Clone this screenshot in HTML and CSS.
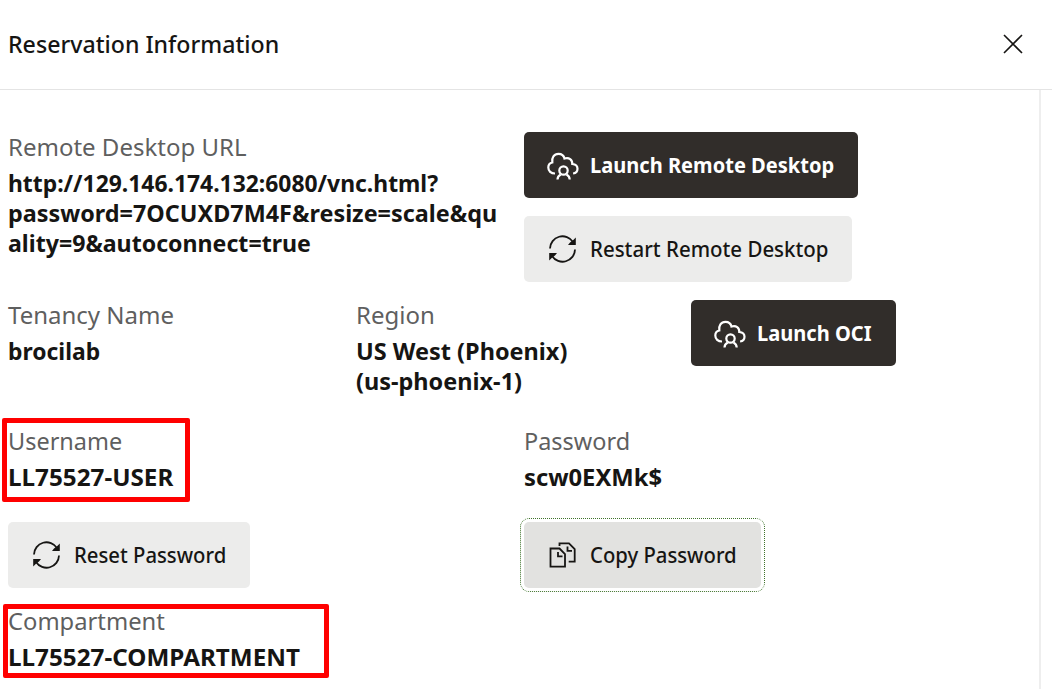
FILE: index.html
```
<!DOCTYPE html>
<html lang="en"><head><meta charset="utf-8"><title>Reservation Information</title><link rel="stylesheet" href="styles.css"></head>
<body>
<svg class="symbols" aria-hidden="true">
<symbol id="cloud" viewBox="0 0 32 32"><path d="M8 24.500C4 24.500 1.300 22 1.300 18.500c0-3 1.500-4.500 4-5C4.500 8.500 7 4.800 11.500 4.800c3 0 5.300 1.700 6 4.700 4.500-1.500 8 1.200 7.800 5.500 3 .3 5.200 2 5.200 4.700 0 2.500-1.700 4.300-4.400 4.800"/><circle cx="16.500" cy="21.500" r="4.200"/><path d="M10.500 30.500c0-2.200 1-3.800 3.200-5M22.700 30.500c0-2.200-1-3.800-3.200-5"/></symbol>
<symbol id="refresh" viewBox="0 0 32 32"><path d="M3 15.500A12.500 12.500 0 0 1 26 9M28 16.500A12.500 12.500 0 0 1 5 23"/><path class="solid" d="M28.800 4.500V12H21l2-2.500 3-2.300zM2.200 27.500V20H10l-2 2.500-3 2.300z"/></symbol>
<symbol id="copy" viewBox="0 0 32 32"><path d="M3.500 9.500h9l5.500 5.500V27.700H3.500zM11 13v4.300h4.500M12.500 7V4.300h9.500l5.700 5.700v12.700h-6M20.500 7.500v4.300H25"/></symbol>
</svg>
<main class="dialog">
<header class="header"><h1 class="title"><span class="fit w96">Reservation Information</span></h1><svg class="close" viewBox="0 0 20 20"><path d="M1 1l18 18M19 1L1 19"/></svg></header>
<div class="content">
<section class="row desktop">
<div class="field"><div class="label">Remote Desktop URL</div><div class="value"><span class="fit w95">http://129.146.174.132:6080/vnc.html?</span><br><span class="fit w97">password=7OCUXD7M4F&amp;resize=scale&amp;qu</span><br><span class="fit w96">ality=9&amp;autoconnect=true</span></div></div>
<div class="actions"><button class="button dark launch"><svg class="icon"><use href="#cloud"/></svg><span class="fit w91">Launch Remote Desktop</span></button><button class="button restart"><svg class="icon"><use href="#refresh"/></svg><span class="fit w93">Restart Remote Desktop</span></button></div>
</section>
<section class="row tenancy"><div class="field"><div class="label">Tenancy Name</div><div class="value"><span class="fit w95">brocilab</span></div></div><div class="field"><div class="label">Region</div><div class="value"><span class="fit w98">US West (Phoenix)</span><br><span class="fit w98">(us-phoenix-1)</span></div></div><button class="button dark oci"><svg class="icon"><use href="#cloud"/></svg><span class="fit w91">Launch OCI</span></button></section>
<section class="row credentials"><div class="field marked username"><div class="label"><span class="fit w98">Username</span></div><div class="value"><span class="fit w101">LL75527-USER</span></div></div><div class="field"><div class="label"><span class="fit w98">Password</span></div><div class="value"><span class="fit w99">scw0EXMk$</span></div></div></section>
<section class="row passwords"><button class="button reset"><svg class="icon"><use href="#refresh"/></svg><span class="fit w92">Reset Password</span></button><button class="button copy"><svg class="icon"><use href="#copy"/></svg><span class="fit w92">Copy Password</span></button></section>
<section class="field marked compartment"><div class="label"><span class="fit w99">Compartment</span></div><div class="value"><span class="fit w101">LL75527-COMPARTMENT</span></div></section>
</div></main></body></html>
```
FILE: styles.css
```
*,*::after{box-sizing:border-box}
body{margin:0;background:#fff;color:#161513;font:24px/30px "Noto Sans",sans-serif;overflow:hidden}
.symbols{display:none}
.dialog{width:1052px;height:689px;overflow:hidden}
.header{height:90px;border-bottom:1px solid #e4e4e4;padding:0 29px 1px 8px;display:flex;align-items:center;justify-content:space-between}
.title{font-size:24px;font-weight:500;margin:0}
.close{width:20px;height:20px;fill:none;stroke:#161513;stroke-width:1.6}
.content{width:1041px;height:599px;padding:42px 0 0 8px;border-right:2px solid #eee}
.row{display:grid;grid-template-columns:516px 1fr}
.desktop{height:168px}
.field{white-space:nowrap}
.label{color:#5f5f5f;height:36px}
.value{font-weight:700}
.fit{display:inline-block;transform-origin:left center}
.w91{transform:scaleX(.912)}.w92{transform:scaleX(.922)}.w93{transform:scaleX(.93)}
.w95{transform:scaleX(.953)}.w96{transform:scaleX(.964)}.w97{transform:scaleX(.974)}
.w98{transform:scaleX(.978)}.w99{transform:scaleX(.99)}.w101{transform:scaleX(1.01)}
.actions{display:flex;flex-direction:column;align-items:flex-start;gap:18px}
.button{height:66px;border:0;border-radius:5px;padding:0 0 2px 23px;background:#ececeb;color:#161513;display:flex;align-items:center;gap:11px;font:500 22px/30px "Noto Sans",sans-serif;white-space:nowrap}
.dark{background:#312d2a;color:#fff;font-weight:700}
.icon{width:32px;height:32px;margin-top:2px;fill:none;stroke:currentColor;stroke-width:1.8;flex:none}
.dark .icon{stroke-width:2.2}
.solid{fill:currentColor;stroke:none}
.launch{width:334px}.restart{width:328px}
.tenancy{height:126px;grid-template-columns:348px 335px 1fr}
.oci{width:205px}
.credentials{height:96px}
.passwords{height:84px}
.reset{width:242px}
.copy{width:237px;background:#e2e2e0;outline:1px dotted #3f732b;outline-offset:3px}
.marked{position:relative}
.marked::after{content:"";position:absolute;border:5px solid #f00;border-radius:2px;pointer-events:none}
.username::after{left:-6px;top:-8px;width:188px;height:84px}
.compartment::after{left:-5px;top:-2px;width:326px;height:74px}
```
